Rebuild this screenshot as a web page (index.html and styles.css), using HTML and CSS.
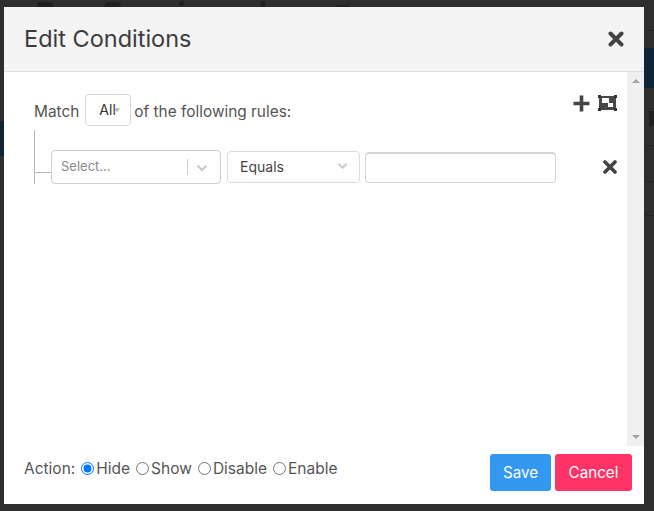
FILE: index.html
```html
<!DOCTYPE html>
<html lang="en">
<head>
<meta charset="utf-8">
<title>Edit Conditions</title>
<link rel="stylesheet" href="styles.css">
</head>
<body>
<div class="backdrop" aria-hidden="true">
  <div class="navy navy-left"></div>
  <div class="navy navy-right"></div>
  <div class="hair hair-1"></div>
  <div class="hair hair-2"></div>
  <div class="hair hair-3"></div>
  <div class="hair hair-4"></div>
  <div class="glyph glyph-1"></div>
  <div class="glyph glyph-2"></div>
  <div class="glyph glyph-3"></div>
  <div class="glyph glyph-4"></div>
  <div class="glyph glyph-5"></div>
  <div class="glyph glyph-6"></div>
</div>

<main class="modal">
  <header class="modal-header">
    <h1 class="modal-title">Edit Conditions</h1>
    <button class="icon-btn" aria-label="Close">
      <svg class="icon-x-lg" viewBox="0 0 16 16"><path d="M2.500 2.500 13.500 13.500M13.500 2.500 2.500 13.500"/></svg>
    </button>
  </header>

  <div class="modal-body">
    <section class="content">
      <div class="match-row">
        <div class="match-text">
          <span>Match</span>
          <div class="mini-select">
            <select class="all-select"><option>All</option><option>Any</option></select>
            <svg class="all-arrow" viewBox="0 0 10 8"><path d="M1 1.500 5 6.500 9 1.500Z"/></svg>
          </div>
          <span class="match-tail">of the following rules:</span>
        </div>
        <div class="group-tools">
          <svg class="tool-plus" viewBox="0 0 17 17"><path d="M8.500 0.500V16.500M0.500 8.500H16.500"/></svg>
          <svg class="tool-group" viewBox="0 0 19 16">
            <rect class="fill" x="1" y="1" width="17" height="14"/>
            <rect class="hole" x="4" y="3" width="7" height="5"/>
            <rect class="hole" x="10" y="8" width="5" height="4"/>
            <rect class="corner" x="0" y="0" width="3" height="3"/>
            <rect class="corner" x="16" y="0" width="3" height="3"/>
            <rect class="corner" x="0" y="13" width="3" height="3"/>
            <rect class="corner" x="16" y="13" width="3" height="3"/>
          </svg>
        </div>
      </div>

      <div class="rule">
        <div class="tree"><div class="tree-branch"></div></div>
        <div class="combo">
          <span class="combo-placeholder">Select...</span>
          <span class="combo-sep"></span>
          <svg class="chevron" viewBox="0 0 12 8"><path d="M1.500 1.500 6 6 10.500 1.500"/></svg>
        </div>
        <div class="op-select">
          <select class="equals-select"><option>Equals</option><option>Not equals</option></select>
          <svg class="op-chevron" viewBox="0 0 12 8"><path d="M1.500 1.500 6 6 10.500 1.500"/></svg>
        </div>
        <input class="value-input" type="text" aria-label="Value">
        <button class="icon-btn rule-remove" aria-label="Remove rule">
          <svg class="icon-x" viewBox="0 0 14 14"><path d="M2 2 12 12M12 2 2 12"/></svg>
        </button>
      </div>
    </section>

    <div class="scrollbar" aria-hidden="true">
      <svg class="arrow" viewBox="0 0 8 4"><path d="M4 0 8 4H0Z"/></svg>
      <svg class="arrow" viewBox="0 0 8 4"><path d="M0 0H8L4 4Z"/></svg>
    </div>
  </div>

  <footer class="modal-footer">
    <form class="actions">
      <span class="action-label">Action:</span>
      <label class="radio"><input type="radio" name="action" checked>Hide</label>
      <label class="radio"><input type="radio" name="action">Show</label>
      <label class="radio"><input type="radio" name="action">Disable</label>
      <label class="radio"><input type="radio" name="action">Enable</label>
    </form>
    <div class="buttons">
      <button class="btn btn-save">Save</button>
      <button class="btn btn-cancel">Cancel</button>
    </div>
  </footer>
</main>
</body>
</html>
```

FILE: styles.css
```css
* { box-sizing: border-box; }

html, body {
  margin: 0;
  height: 100%;
}

body {
  width: 654px;
  height: 511px;
  overflow: hidden;
  position: relative;
  background: #2e2e2e;
  font-family: Inter, "Liberation Sans", sans-serif;
  color: #4a4a4a;
  padding: 7px 10px 7px 4px;
}

/* dimmed page behind the modal */
.backdrop { position: absolute; inset: 0; overflow: hidden; }
.navy { position: absolute; background: #0f2437; }
.navy-left { left: 0; top: 121px; width: 4px; height: 35px; }
.navy-right { left: 644px; top: 48px; width: 10px; height: 40px; }
.hair { position: absolute; left: 644px; width: 10px; height: 1px; background: #262626; }
.hair-1 { top: 30px; }
.hair-2 { top: 145px; }
.hair-3 { top: 181px; }
.hair-4 { top: 215px; }
.glyph { position: absolute; background: #202020; }
.glyph-1 { left: 37px; top: 2px; width: 16px; height: 5px; border-radius: 2px 4px 0 0; }
.glyph-2 { left: 104px; top: 2px; width: 17px; height: 5px; border-radius: 8px 8px 0 0; }
.glyph-3 { left: 179px; top: 1px; width: 5px; height: 5px; border-radius: 50%; }
.glyph-4 { left: 260px; top: 1px; width: 6px; height: 6px; border-radius: 50%; }
.glyph-5 { left: 336px; top: 5px; width: 13px; height: 2px; }
.glyph-6 { left: 649px; top: 111px; width: 5px; height: 15px; }

.modal {
  position: relative;
  width: 640px;
  height: 497px;
  background: #fff;
  display: flex;
  flex-direction: column;
}

.modal-header {
  flex: none;
  height: 65px;
  background: #f4f4f4;
  border-bottom: 1px solid #dcdcdc;
  display: flex;
  align-items: center;
  justify-content: space-between;
  padding: 0 20px 0 20px;
}

.modal-title {
  margin: 0 0 2px;
  font-size: 23.500px;
  font-weight: 400;
  color: #3c3c3c;
}

.icon-btn {
  border: 0;
  background: none;
  padding: 0;
  display: block;
  line-height: 0;
}

.icon-x-lg { width: 16px; height: 16px; fill: none; stroke: #444; stroke-width: 4; stroke-linecap: round; display: block; }
.icon-x { width: 14px; height: 14px; fill: none; stroke: #444; stroke-width: 3.600; stroke-linecap: round; display: block; }

.modal-body {
  flex: none;
  height: 374px;
  display: flex;
}

.content {
  flex: 1;
  padding: 22px 0 0 30px;
}

.match-row {
  display: flex;
  justify-content: space-between;
  height: 36px;
  padding-right: 10px;
}

.match-text {
  display: flex;
  align-items: center;
  height: 32px;
  font-size: 15.400px;
  gap: 4px;
  color: #555;
}

.match-text > span { position: relative; top: 1px; }

.match-tail { margin-left: -1px; }

.mini-select { position: relative; margin-left: 2px; }

.all-select {
  display: block;
  appearance: none;
  width: 46px;
  height: 32px;
  background: #fff;
  border: 1px solid #d8d8d8;
  border-radius: 4px;
  padding: 0 0 1px 13px;
  font: 14px Inter, "Liberation Sans", sans-serif;
  color: #333;
}

.all-arrow {
  position: absolute;
  left: 28px;
  top: 13px;
  width: 8px;
  height: 6px;
  fill: #b4b4b4;
}

.group-tools {
  display: flex;
  align-items: center;
  gap: 8px;
  height: 18px;
}

.tool-plus { width: 17px; height: 17px; fill: none; stroke: #444; stroke-width: 3.600; display: block; }
.tool-group { width: 19px; height: 16px; display: block; }
.tool-group .fill { fill: #484848; }
.tool-group .hole { fill: #fff; }
.tool-group .corner { fill: #333; }

.rule {
  display: flex;
  align-items: center;
  height: 54px;
}

.tree {
  flex: none;
  width: 17px;
  height: 54px;
  border-left: 1px solid #b8b8b8;
}

.tree-branch {
  height: 43px;
  border-bottom: 1px solid #b8b8b8;
}

.combo {
  flex: none;
  width: 170px;
  height: 34px;
  margin-top: 20px;
  border: 1px solid #cfcfcf;
  border-radius: 4px;
  display: flex;
  align-items: center;
  padding-left: 9px;
}

.combo-placeholder {
  flex: 1;
  font-size: 13px;
  color: #8a8a8a;
  position: relative;
  top: -1px;
}

.combo-sep {
  width: 1px;
  height: 16px;
  background: #ccc;
}

.chevron {
  width: 12px;
  height: 8px;
  margin: 1px 12px 0 8px;
  fill: none;
  stroke: #ccc;
  stroke-width: 2.400;
}

.op-select {
  position: relative;
  flex: none;
  margin-left: 6px;
  margin-top: 20px;
}

.equals-select {
  display: block;
  appearance: none;
  width: 133px;
  height: 32px;
  background: #fff;
  border: 1px solid #dcdcdc;
  border-radius: 4px;
  padding: 0 0 1px 12px;
  font: 14px Inter, "Liberation Sans", sans-serif;
  color: #444;
}

.op-chevron {
  position: absolute;
  right: 12px;
  top: 11px;
  width: 11px;
  height: 8px;
  fill: none;
  stroke: #ccc;
  stroke-width: 2.200;
}

.value-input {
  flex: none;
  width: 191px;
  height: 31px;
  margin-left: 5px;
  margin-top: 20px;
  border: 1px solid #d5d5d5;
  border-top-width: 2px;
  border-radius: 4px;
  background: #fff;
}

.rule-remove { margin-left: 47px; margin-top: 20px; }

.scrollbar {
  flex: none;
  width: 17px;
  background: #f0f0f0;
  display: flex;
  flex-direction: column;
  justify-content: space-between;
  align-items: center;
  padding: 7px 0;
}

.arrow { width: 8px; height: 4px; fill: #a3a3a3; display: block; }

.modal-footer {
  flex: 1;
  display: flex;
  justify-content: space-between;
  padding: 8px 12px 0 20px;
}

.actions {
  display: flex;
  align-items: center;
  height: 29px;
  margin: 0;
  font-size: 15.500px;
  color: #555;
}

.action-label { margin-right: 5px; }

.radio {
  display: flex;
  align-items: center;
  margin-right: 5px;
}

.radio input {
  margin: 0 2px 0 1px;
  width: 13px;
  height: 13px;
}

.buttons { display: flex; gap: 4px; }

.btn {
  height: 37px;
  border: 0;
  border-radius: 3px;
  color: #fff;
  font: 15.200px Inter, "Liberation Sans", sans-serif;
  padding: 0;
}

.btn-save { width: 61px; background: #3498f3; }
.btn-cancel { width: 77px; background: #ff3366; }
```
